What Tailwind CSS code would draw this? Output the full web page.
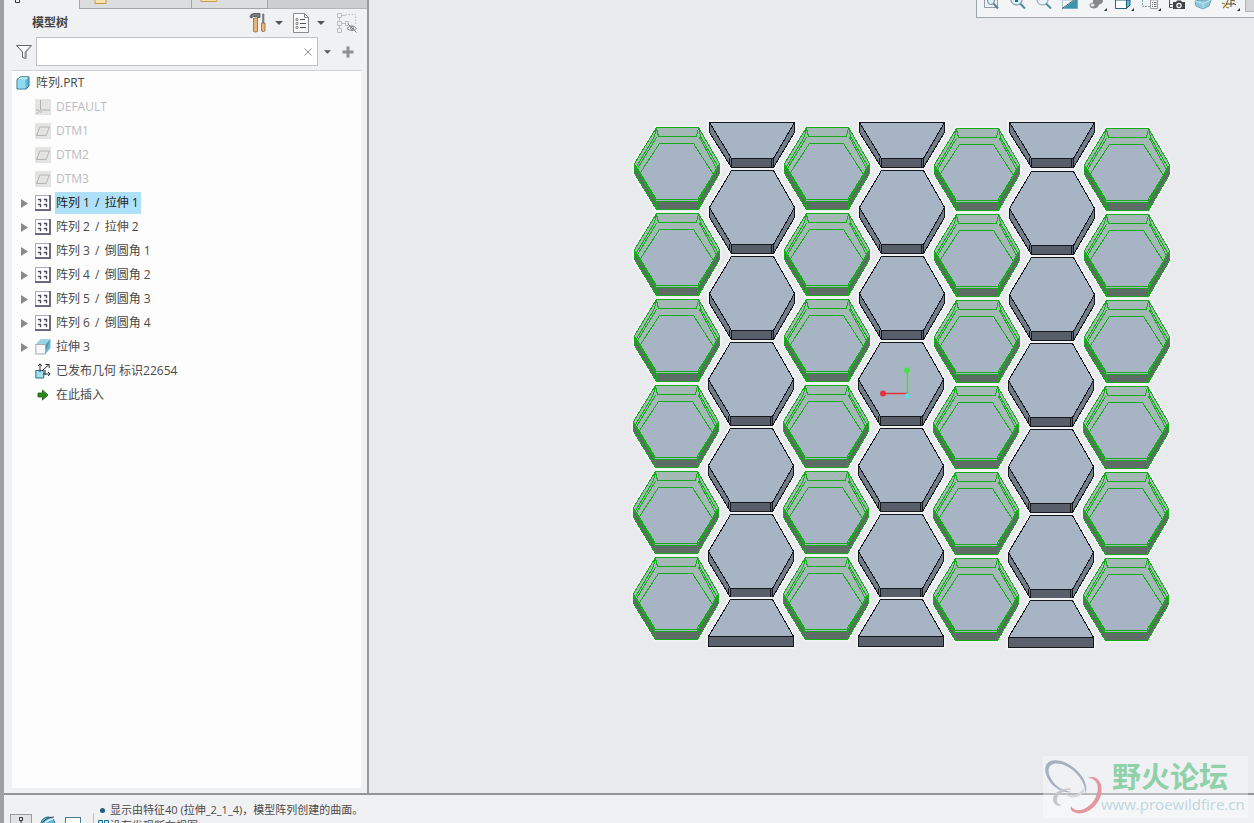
<!DOCTYPE html>
<html lang="zh-CN">
<head>
    <meta charset="UTF-8">
    <meta name="viewport" content="width=device-width, initial-scale=1.0">
    <script src="https://cdn.jsdelivr.net/npm/@tailwindcss/browser@4"></script>
    <title>阵列.PRT</title>
</head>
<body class="flex h-screen overflow-hidden bg-[#f0f1f3] font-['Open_Sans','Noto_Sans_CJK_SC',sans-serif] text-xs text-[#4a4a4a]">
    <!-- Shared icons and model shapes -->
    <svg class="hidden">
        <symbol id="i-datum" viewBox="0 0 16 16">
            <rect width="16" height="16" fill="#e4e4e2"/>
            <path d="M1.500 12.500L5 4h9.500L11 12.500z" fill="none" stroke="#b4b4b2"/>
        </symbol>
        <symbol id="i-pattern" viewBox="0 0 16 16">
            <path d="M.5.5h14v14H.5z" fill="#fff" stroke="#a9a5b4"/>
            <path d="M15 0v15H0" fill="none" stroke="#6d6880" stroke-width="2"/>
            <path d="M3 4h3v3H5V5H3zM9 4h3v3h-1V5H9zM3 9h3v3H5v-2H3zM9 9h3v3h-1v-2H9z" fill="#4b4660" stroke="#4b4660" stroke-width=".4"/>
        </symbol>
        <symbol id="i-arrow" viewBox="0 0 8 10">
            <path d="M0 1l7 4.500L0 10z" fill="#8a8a8a"/>
        </symbol>
        <symbol id="i-down" viewBox="0 0 8 4">
            <path d="M0 0h8L4 4z" fill="#555"/>
        </symbol>
        <symbol id="green-hex" overflow="visible">
            <path d="M22 0H64L85 36V46L64 82H22L0 46V36Z" fill="none" stroke="#f0f1f2" stroke-width="5"/>
            <path d="M22 0H64L85 36V46L64 82H22L0 46V36Z" fill="#a6b4c4"/>
            <path d="M22 0H64L85 37L79 47L59 16H25L6 45L0 37Z" fill="#a4b8b6"/>
            <path d="M0 38L22 73H64L85 37V46L64 82H22L0 46Z" fill="#5d6d66"/>
            <g fill="none" stroke="#14ac18">
                <path d="M22 0H64L85 36V46L64 82H22L0 46V36Z"/>
                <path d="M0 37L22 74H64L85 37M1 41L20 9L22 0M22 1L24 9H62L64 1M64 0L66 9L84 40M6 45L25 16H59L79 47L63 72H22L3 41L22 10M65 10L82 41L64 73M22 74V82M64 74V82"/>
                <path d="M0 38L22 75" stroke-width="1.500"/>
            </g>
        </symbol>
        <symbol id="hex" overflow="visible">
            <path d="M22 0H64L85 37V47L64 83H22L0 47V37Z" fill="none" stroke="#f0f1f2" stroke-width="5"/>
            <path d="M0 37L22 74V83L0 47ZM85 37L64 74V83L85 47Z" fill="#727b88"/>
            <path d="M22 74H64V83H22Z" fill="#595f6a"/>
            <path d="M22 0H64L85 37L64 74H22L0 37Z" fill="#a6b4c4"/>
            <path d="M22 0H64L85 37V47L64 83H22L0 47V37ZM0 37L22 74H64L85 37M20 73V80M22 74V83M62 74V83M64 74V83" fill="none" stroke="#15171d"/>
        </symbol>
        <symbol id="top-half" overflow="visible">
            <path d="M0 0H85V10L64 45H22L0 10Z" fill="none" stroke="#f0f1f2" stroke-width="5"/>
            <path d="M0 0H85V10L64 45H22L0 10Z" fill="#727b88"/>
            <path d="M22 36H64V45H22Z" fill="#595f6a"/>
            <path d="M0 0H85L64 36H22Z" fill="#a6b4c4"/>
            <path d="M0 0H85V10L64 45H22L0 10ZM0 0L22 36H64L85 0M20 35V42M22 36V45M62 36V45M64 36V45" fill="none" stroke="#15171d"/>
        </symbol>
        <symbol id="bottom-half" overflow="visible">
            <path d="M22 0H64L85 37V47H0V37Z" fill="none" stroke="#f0f1f2" stroke-width="5"/>
            <path d="M0 37H85V47H0Z" fill="#5a616c"/>
            <path d="M22 0H64L85 37H0Z" fill="#a6b4c4"/>
            <path d="M22 0H64L85 37V47H0V37ZM0 37H85" fill="none" stroke="#15171d"/>
        </symbol>
    </svg>

    <div class="w-1 shrink-0 bg-[#a0a0a0]"></div>

    <div class="flex min-w-0 flex-1 flex-col">
        <div class="flex min-h-0 flex-1">
            <!-- Model tree panel -->
            <aside class="flex w-[365px] shrink-0 flex-col border-r-2 border-[#98999d]">
                <div class="flex h-[9px] shrink-0 bg-[#cdced0]">
                    <div class="w-[75px] bg-[#f0f1f3]">
                        <svg class="ml-2.5 h-1 w-2.5" viewBox="0 0 10 4"><path d="M1.500 0v2.500h4V0" fill="none" stroke="#333"/></svg>
                    </div>
                    <div class="w-28 border-b border-l border-[#a4a5a8] bg-[#dcdddf]">
                        <svg class="ml-3.5 h-1 w-3.5" viewBox="0 0 14 4"><path d="M1 0v3.500h11V0" fill="#fbe3ac" stroke="#c89a50"/></svg>
                    </div>
                    <div class="w-[77px] border-x border-b border-[#a4a5a8] bg-[#dcdddf]">
                        <svg class="ml-2 h-0.5 w-[18px]" viewBox="0 0 18 2"><path d="M1 0v1.500h16V0" fill="#fbe3ac" stroke="#c89a50"/></svg>
                    </div>
                    <div class="flex-1 border-b border-[#b4b5b8]"></div>
                </div>

                <div class="flex h-7 shrink-0 items-center pr-2.5 pl-7">
                    <h2 class="flex-1 font-semibold text-[#444]">模型树</h2>
                    <button type="button" aria-label="设置" class="flex items-center">
                        <svg class="h-5 w-[18px]" viewBox="0 0 18 20">
                            <path d="M1 3.500Q2 .5 5 .5h6v4H8.500l-1-1h-3L2 5z" fill="#777b80" stroke="#4a4d50" stroke-width=".8"/>
                            <path d="M4.500 5h4v13.500q-2 1.200-4 0z" fill="#e9b478" stroke="#8d6a42" stroke-width=".8"/>
                            <path d="M13.500 1h1.500v9h-1.500z" fill="#82868a" stroke="#5c6064" stroke-width=".5"/>
                            <path d="M12.500 10h3.500v8q-1.700 1.200-3.500 0z" fill="#e9b478" stroke="#8d6a42" stroke-width=".8"/>
                        </svg>
                        <svg class="ml-2 h-1 w-2"><use href="#i-down"/></svg>
                    </button>
                    <button type="button" aria-label="显示" class="ml-2.5 flex items-center">
                        <svg class="h-5 w-4" viewBox="0 0 16 20">
                            <path d="M.5.5h11l4 4v15H.5z" fill="#fafafa" stroke="#8a8d91"/>
                            <path d="M11.500.5v4h4" fill="none" stroke="#8a8d91"/>
                            <path d="M7 6.500h5M7 10.500h6M7 14.500h6" stroke="#555"/>
                            <path d="M3 5.500h2v2H3zM3 9.500h2v2H3zM3 13.500h2v2H3z" fill="none" stroke="#777" stroke-width=".8"/>
                        </svg>
                        <svg class="ml-2 h-1 w-2"><use href="#i-down"/></svg>
                    </button>
                    <button type="button" aria-label="隐藏项" class="ml-3">
                        <svg class="h-5 w-5" viewBox="0 0 20 20" fill="none" stroke="#bdbdbd">
                            <path d="M.5.5h4v4h-4zM.5 8.500h4v4h-4zM.5 15.500h4v4h-4zM8.500 8.500h3v4h-3z"/>
                            <path d="M2.500 4.500v4M2.500 12.500v3M4.500 10.500h4M4.500 2.500h4"/>
                            <path d="M8.500 1.500h10v10" stroke-dasharray="1.500 1.500"/>
                            <path d="M10 15.500q5-5.500 9.500 0q-4.500 4-9.500 0zM10.500 10.500l9 9" stroke="#888"/>
                            <circle cx="15" cy="15" r="1.500" stroke="#888"/>
                        </svg>
                    </button>
                </div>

                <div class="flex h-[29px] shrink-0 items-center pl-3">
                    <svg class="mr-1 h-4 w-4" viewBox="0 0 16 16">
                        <path d="M.5 1.500h15L10 8v6.500l-3.500-1V8z" fill="#fafafa" stroke="#666"/>
                        <path d="M10 8v6.500l-1.500-.5V8l5-5.500h1.500z" fill="#999"/>
                    </svg>
                    <div class="flex h-full w-[282px] items-center border border-[#bfc1c4] bg-white pr-1">
                        <input type="text" aria-label="搜索模型树" class="h-full min-w-0 flex-1 px-1 outline-none">
                        <button type="button" aria-label="清除">
                            <svg class="h-2.5 w-2.5" viewBox="0 0 10 10"><path d="M1.500 1.500l7 7M8.500 1.500l-7 7" stroke="#8c8c8c"/></svg>
                        </button>
                    </div>
                    <button type="button" aria-label="搜索选项" class="ml-1.5"><svg class="h-1 w-[7px]"><use href="#i-down"/></svg></button>
                    <button type="button" aria-label="添加" class="ml-[11px]">
                        <svg class="h-3 w-3" viewBox="0 0 12 12"><path d="M6 .5v11M.5 6h11" stroke="#8f8f8f" stroke-width="3"/></svg>
                    </button>
                </div>

                <ul class="mt-1 mr-1.5 mb-[5px] ml-2 flex-1 overflow-hidden border-t border-[#d0d1d4] bg-[#fdfdfd]">
                    <li class="flex h-6 items-center gap-1.5 pl-1">
                        <svg class="h-3.5 w-3.5" viewBox="0 0 14 14">
                            <path d="M1 3.500L4.500.8H13v9L10 13H1z" fill="#5fb4d2" stroke="#35728c"/>
                            <path d="M1.500 4h8v8.500h-8z" fill="#8fdcf2"/>
                            <path d="M1.500 3.500l3-2.200h8L9.800 3.700z" fill="#c4effa"/>
                        </svg>
                        <span>阵列.PRT</span>
                    </li>
                    <li class="flex h-6 items-center gap-[5px] pl-[23px] text-[#bcbcbc]">
                        <svg class="h-4 w-4" viewBox="0 0 16 16">
                            <rect width="16" height="16" fill="#e4e4e2"/>
                            <path d="M5.500 1v10H15M5.500 11L1.500 15M1 11h3M5 13h2" fill="none" stroke="#b0b0ae"/>
                        </svg>
                        <span>DEFAULT</span>
                    </li>
                    <li class="flex h-6 items-center gap-[5px] pl-[23px] text-[#bcbcbc]"><svg class="h-4 w-4"><use href="#i-datum"/></svg><span>DTM1</span></li>
                    <li class="flex h-6 items-center gap-[5px] pl-[23px] text-[#bcbcbc]"><svg class="h-4 w-4"><use href="#i-datum"/></svg><span>DTM2</span></li>
                    <li class="flex h-6 items-center gap-[5px] pl-[23px] text-[#bcbcbc]"><svg class="h-4 w-4"><use href="#i-datum"/></svg><span>DTM3</span></li>
                    <li class="flex h-6 items-center pl-[9px]">
                        <button type="button" aria-label="展开" class="mr-1.5"><svg class="h-2.5 w-2"><use href="#i-arrow"/></svg></button>
                        <svg class="mr-1 h-4 w-4"><use href="#i-pattern"/></svg>
                        <span class="h-[22px] bg-[#aee0f8] pr-0.5 pl-px leading-[22px] text-[#222]">阵列 1 <span class="mx-0.5">/</span> 拉伸 1</span>
                    </li>
                    <li class="flex h-6 items-center pl-[9px]">
                        <button type="button" aria-label="展开" class="mr-1.5"><svg class="h-2.5 w-2"><use href="#i-arrow"/></svg></button>
                        <svg class="mr-[5px] h-4 w-4"><use href="#i-pattern"/></svg><span>阵列 2 <span class="mx-0.5">/</span> 拉伸 2</span>
                    </li>
                    <li class="flex h-6 items-center pl-[9px]">
                        <button type="button" aria-label="展开" class="mr-1.5"><svg class="h-2.5 w-2"><use href="#i-arrow"/></svg></button>
                        <svg class="mr-[5px] h-4 w-4"><use href="#i-pattern"/></svg><span>阵列 3 <span class="mx-0.5">/</span> 倒圆角 1</span>
                    </li>
                    <li class="flex h-6 items-center pl-[9px]">
                        <button type="button" aria-label="展开" class="mr-1.5"><svg class="h-2.5 w-2"><use href="#i-arrow"/></svg></button>
                        <svg class="mr-[5px] h-4 w-4"><use href="#i-pattern"/></svg><span>阵列 4 <span class="mx-0.5">/</span> 倒圆角 2</span>
                    </li>
                    <li class="flex h-6 items-center pl-[9px]">
                        <button type="button" aria-label="展开" class="mr-1.5"><svg class="h-2.5 w-2"><use href="#i-arrow"/></svg></button>
                        <svg class="mr-[5px] h-4 w-4"><use href="#i-pattern"/></svg><span>阵列 5 <span class="mx-0.5">/</span> 倒圆角 3</span>
                    </li>
                    <li class="flex h-6 items-center pl-[9px]">
                        <button type="button" aria-label="展开" class="mr-1.5"><svg class="h-2.5 w-2"><use href="#i-arrow"/></svg></button>
                        <svg class="mr-[5px] h-4 w-4"><use href="#i-pattern"/></svg><span>阵列 6 <span class="mx-0.5">/</span> 倒圆角 4</span>
                    </li>
                    <li class="flex h-6 items-center pl-[9px]">
                        <button type="button" aria-label="展开" class="mr-1.5"><svg class="h-2.5 w-2"><use href="#i-arrow"/></svg></button>
                        <svg class="mr-[5px] h-4 w-4" viewBox="0 0 16 16">
                            <path d="M5.500.5h10v8.500L10.500 15V5.500H.8z" fill="#6fb5d0"/>
                            <path d="M5.500.5h10l-5 5H.8z" fill="#9bd3e6"/>
                            <path d="M10.500 5.500l5-5L11 12z" fill="#5598b6"/>
                            <path d="M.8 5.500h9.700V15H.8z" fill="#f8f8f8" stroke="#a8aaad"/>
                        </svg>
                        <span>拉伸 3</span>
                    </li>
                    <li class="flex h-6 items-center gap-[5px] pl-[23px]">
                        <svg class="h-4 w-4" viewBox="0 0 16 16">
                            <path d="M.8 7.500h8v7.500h-8z" fill="#9fe0ee" stroke="#2f6f86"/>
                            <path d="M5 9V1M3 3l2-2.200L7 3M7 8l7-6.500M10.500 1.500h3.700V5M8 11h7M13 9l2.200 2L13 13M10 7v5" fill="none" stroke="#2d3338"/>
                        </svg>
                        <span>已发布几何 标识22654</span>
                    </li>
                    <li class="flex h-6 items-center gap-[5px] pl-[23px]">
                        <svg class="h-4 w-4" viewBox="0 0 16 16"><path d="M3 6h4.500V3L13 8l-5.500 5v-3H3z" fill="#2c8a1b" stroke="#1c5d12" stroke-width=".8"/></svg>
                        <span>在此插入</span>
                    </li>
                </ul>
            </aside>

            <!-- Graphics area -->
            <main class="relative min-w-0 flex-1 bg-[#e8eaee]">
                <svg class="h-full w-full" viewBox="369 0 885 793" role="img" aria-label="模型视图">
                    <g id="model" shape-rendering="crispEdges"></g>
                    <path d="M907.500 395V371" stroke="#45dc45" stroke-width="1.500"/>
                    <path d="M883 393.500H907" stroke="#e0353d" stroke-width="1.500"/>
                    <circle cx="883" cy="393.500" r="3" fill="#e0353d"/>
                    <circle cx="907" cy="370.500" r="3" fill="#4ae04a"/>
                    <circle cx="907" cy="396" r="2.500" fill="#5edff0"/>
                </svg>

                <div class="absolute top-0 right-0 flex h-[18px] w-[278px] border-b border-l border-[#9fa6ae] bg-[#f3f4f6] pl-0.5">
                    <button type="button" aria-label="重新调整" class="h-4 w-[26px]"><svg class="h-4 w-[26px]" viewBox="0 0 26 16" fill="none">
                        <path d="M5.500 0v7.500h13V0" stroke="#8f9bab"/><circle cx="12" cy="1" r="3.500" fill="#d8f0f8" stroke="#6b8592"/><path d="M14.500 3.500l4.500 5" stroke="#5a8394" stroke-width="2"/></svg></button>
                    <button type="button" aria-label="放大" class="h-4 w-[26px]"><svg class="h-4 w-[26px]" viewBox="0 0 26 16" fill="none">
                        <path d="M6 0a5.500 5 0 0 0 11 0" fill="#d8f0f8" stroke="#6b8592"/><path d="M11.500 0v2M10 1h3" stroke="#1f6c90" stroke-width="2"/><path d="M15 3.500l5 5" stroke="#4f8ba0" stroke-width="2"/></svg></button>
                    <button type="button" aria-label="缩小" class="h-4 w-[26px]"><svg class="h-4 w-[26px]" viewBox="0 0 26 16" fill="none">
                        <path d="M6 0a5.500 5 0 0 0 11 0" fill="#e8f3f7" stroke="#8a979e"/><path d="M15 3.500l5 5" stroke="#4f8ba0" stroke-width="2"/></svg></button>
                    <button type="button" aria-label="重画" class="h-4 w-[26px]"><svg class="h-4 w-[26px]" viewBox="0 0 26 16">
                        <path d="M5.500 0h15v8.500h-15z" fill="#f8fbfc" stroke="#a9c2cb"/><path d="M20.500 0v8.500H6L18 0z" fill="#3d93b0"/><path d="M5 8.500L17 0" stroke="#266178"/></svg></button>
                    <button type="button" aria-label="渲染" class="h-4 w-[27px]"><svg class="h-4 w-[27px]" viewBox="0 0 27 16">
                        <path d="M10 0h10q0 4-4 4.500-1 4-5.500 4-4-.5-4-3.500 0-2 3.500-2.500z" fill="#85898e"/><ellipse cx="9.500" cy="5" rx="2" ry="1.500" fill="#e8eaec"/><path d="M24 8v3h-3z" fill="#333"/></svg></button>
                    <button type="button" aria-label="显示样式" class="h-4 w-[27px]"><svg class="h-4 w-[27px]" viewBox="0 0 27 16">
                        <path d="M5.500 0v8.500h11V0z" fill="#fff" stroke="#256079"/><path d="M16.500 0v8.500L20 5V0z" fill="#58b8d6" stroke="#256079"/><path d="M24 8v3h-3z" fill="#333"/></svg></button>
                    <button type="button" aria-label="已保存方向" class="h-4 w-[27px]"><svg class="h-4 w-[27px]" viewBox="0 0 27 16">
                        <path d="M5.500 0v6.500h8" fill="none" stroke="#7aaabb" stroke-dasharray="2 1"/><path d="M13.500 0h7v8.500h-7z" fill="#fff" stroke="#9a9da0"/><path d="M15 2.500h1M15 4.500h1M15 6.500h1M17 2.500h2.500M17 4.500h2.500M17 6.500h2.500" stroke="#666"/><path d="M24 8v3h-3z" fill="#333"/></svg></button>
                    <button type="button" aria-label="视图管理器" class="h-4 w-[26px]"><svg class="h-4 w-[26px]" viewBox="0 0 26 16">
                        <path d="M5.500 0v7.500h3M5.500 4.500h3" fill="none" stroke="#555"/><path d="M9 2h3l1-1.500h4L18 2h3v7H9z" fill="#42464a"/><circle cx="15" cy="5.500" r="2.700" fill="#fff"/><circle cx="15" cy="5.500" r="1.500" fill="#555"/></svg></button>
                    <button type="button" aria-label="透视图" class="h-4 w-[26px]"><svg class="h-4 w-[26px]" viewBox="0 0 26 16">
                        <path d="M5 1l5-1h11l-2 6-6 3-7-3z" fill="#8dc7dc" stroke="#6ba4bb"/><path d="M5 1l8 2.500L20.500 0M13 3.500v5" fill="none" stroke="#c5e6f0"/></svg></button>
                    <button type="button" aria-label="基准显示" class="h-4 w-[27px]"><svg class="h-4 w-[27px]" viewBox="0 0 27 16" fill="none">
                        <path d="M7 8l3-3 2-5M6 3l3 1M10 7l3 1" stroke="#9a7428" stroke-width="1.300"/><path d="M10 4h8M15 0v7M15 0l4 1M17 3l3 2" stroke="#5b4c2c"/><path d="M24 8v3h-3z" fill="#333"/></svg></button>
                    <div class="ml-0.5 h-3 flex-1 border-b border-l border-[#b0b3b7] bg-[#d3d5d8]"></div>
                </div>
            </main>
        </div>

        <!-- Message bar -->
        <footer class="flex h-[30px] shrink-0 overflow-hidden border-t-2 border-[#949598]">
            <button type="button" aria-label="模型树" class="mt-[19px] ml-1.5 h-6 w-[22px] border border-[#9b9c9f] bg-[#e2e3e5]">
                <svg class="h-full w-full" viewBox="0 0 20 22"><path d="M8.500 2.500h3v3h-3zM10 6v5M5 10h10" fill="none" stroke="#333"/></svg>
            </button>
            <button type="button" aria-label="浏览器" class="mt-5 ml-2 h-4 w-4">
                <svg class="h-4 w-4" viewBox="0 0 16 16"><circle cx="8" cy="9" r="7" fill="#64b6d8" stroke="#2a718f"/><path d="M3 12q3-7 10-8" fill="none" stroke="#dff3fa" stroke-width="1.500"/><path d="M1 11Q4 2 14 2" fill="none" stroke="#345"/></svg>
            </button>
            <button type="button" aria-label="全屏" class="mt-[22px] ml-[9px] h-3.5 w-4 border border-[#4a7c92] bg-white"></button>
            <div class="mt-[18px] ml-3 h-6 border-l border-[#c0c1c4]"></div>
            <div class="mt-[7px] ml-1 text-[11px] leading-4 whitespace-nowrap">
                <p class="flex items-center"><span class="mr-[5px] ml-0.5 h-[5px] w-[5px] rounded-full bg-[#1d5f80]"></span>显示由特征40 (拉伸_2_1_4)，模型阵列创建的曲面。</p>
                <p class="flex items-center">
                    <svg class="mr-px h-3 w-[11px]" viewBox="0 0 11 12"><path d="M.5.5h4v4h-4zM6.500.5h4v4h-4zM.5 6.500h10v5H.5z" fill="#bfe6f2" stroke="#1d6f91"/></svg>没有发现断布视图
                </p>
            </div>
        </footer>
    </div>

    <!-- Site watermark -->
    <div class="pointer-events-none absolute right-1.5 bottom-[5px] flex h-[62px] w-[205px] bg-white/35">
        <svg class="h-[62px] w-[62px] shrink-0" viewBox="0 0 62 62">
            <path d="M42 38C48 27 33 9 18 5C6 2 0 8 3 18C6 29 18 38 29 36C17 35 9 27 6 18C4 9 10 6 18 8C32 12 44 27 42 38Z" fill="#a5b1c2"/>
            <path d="M45 22C53 18 61 26 58 39C54 53 38 62 29 55C27 53 28 51 28 50C34 60 50 51 54 38C57 28 52 22 45 22Z" fill="#e3969e"/>
            <path d="M29 33C20 31 10 37 10 43C10 48 14 51 19 49C13 48 13 44 15 40C18 36 24 34 29 33Z" fill="#c4c7cc"/>
            <path d="M41 36C36 43 25 43 22 37C26 41 36 40 41 32Z" fill="#d4d7da"/>
        </svg>
        <div class="-ml-1 whitespace-nowrap">
            <p class="mt-[3px] ml-[11px] h-[33px] font-['Noto_Sans_CJK_SC',sans-serif] text-[29px] leading-8 font-bold text-[#90d1aa]">野火论坛</p>
            <p class="text-[15px] leading-6 text-[#bfd7dd]">www.proewildfire.cn</p>
        </div>
    </div>

    <script>
        const model = document.getElementById('model');

        function place(shape, x, y) {
            const use = document.createElementNS('http://www.w3.org/2000/svg', 'use');
            use.setAttribute('href', '#' + shape);
            use.setAttribute('x', x);
            use.setAttribute('y', y);
            model.appendChild(use);
        }

        // Seven columns, 75 apart, alternating patterned and plain;
        // the view is turned slightly, so lower rows lean left
        for (let col = 0; col < 7; col++) {
            const x = 634.5 + col * 75;
            const drop = col > 3 ? 1 : 0;
            if (col % 2 === 0) {
                for (let row = 0; row < 6; row++) {
                    place('green-hex', x - (row > 2 ? 1 : 0), 127.5 + drop + row * 86);
                }
            } else {
                place('top-half', x, 122.5);
                for (let row = 0; row < 5; row++) {
                    place('hex', x - (row > 1 ? 1 : 0), 170.5 + drop + row * 86);
                }
                place('bottom-half', x - 1, 599.5 + drop);
            }
        }
    </script>
</body>
</html>
